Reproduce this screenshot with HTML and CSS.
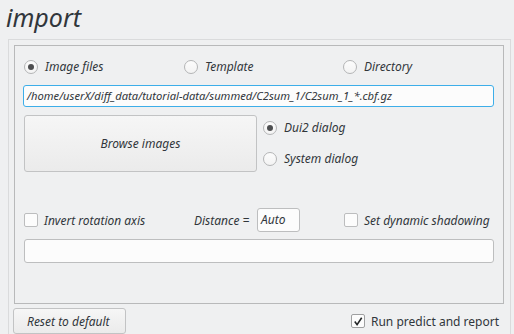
FILE: index.html
```html
<!DOCTYPE html>
<html lang="en">
<head>
    <meta charset="UTF-8">
    <title>import</title>
    <link rel="stylesheet" href="styles.css">
</head>
<body>
    <h1 class="title">import</h1>
    <div class="outer">
        <div class="inner">
            <div class="source-row">
                <label class="radio checked"><span class="dot"></span>Image files</label>
                <label class="radio"><span class="dot"></span>Template</label>
                <label class="radio"><span class="dot"></span>Directory</label>
            </div>
            <div class="path focused">/home/userX/diff_data/tutorial-data/summed/C2sum_1/C2sum_1_*.cbf.gz</div>
            <div class="browse-row">
                <button class="browse">Browse images</button>
                <div class="dialogs">
                    <label class="radio checked"><span class="dot"></span>Dui2 dialog</label>
                    <label class="radio"><span class="dot"></span>System dialog</label>
                </div>
            </div>
            <div class="options-row">
                <label class="check invert"><span class="box"></span>Invert rotation axis</label>
                <span class="dist-label">Distance =</span>
                <div class="auto">Auto</div>
                <label class="check shadow"><span class="box"></span>Set dynamic shadowing</label>
            </div>
            <div class="path empty"></div>
        </div>
        <div class="footer">
            <button class="reset">Reset to default</button>
            <label class="check run">
                <span class="box">
                    <svg width="13" height="13" viewBox="0 0 13 13"><path d="M3 6.5 L5.5 10 L10.5 2.5" fill="none" stroke="#232627" stroke-width="1.7"/></svg>
                </span>Run predict and report</label>
        </div>
    </div>
</body>
</html>
```

FILE: styles.css
```css
* {
    margin: 0;
    padding: 0;
    box-sizing: border-box;
}
html, body {
    width: 100%;
    height: 100%;
    overflow: hidden;
}
body {
    background-color: #eff0f1;
    color: #31363b;
    font-family: 'Noto Sans', sans-serif;
    font-size: 12px;
    font-style: italic;
}
.title {
    font-size: 25px;
    font-weight: normal;
    font-style: italic;
    line-height: 33px;
    height: 39px;
    padding-left: 6px;
    padding-top: 1px;
}
.outer {
    margin-left: 8px;
    width: 503px;
    height: 300px;
    border: 1px solid #dadbdc;
    border-bottom: none;
    padding: 5px 6px 0 5px;
}
.inner {
    height: 259px;
    border: 1px solid #b8b9ba;
    padding: 12px 9px 0 9px;
}
.source-row {
    display: grid;
    grid-template-columns: 160px 159px 1fr;
    height: 16px;
    align-items: center;
}
.radio, .check {
    display: flex;
    align-items: center;
    white-space: nowrap;
}
.dot {
    width: 14px;
    height: 14px;
    border-radius: 50%;
    border: 1px solid #b4b5b6;
    background: linear-gradient(#fcfcfc, #f3f3f3);
    margin-right: 7px;
    display: flex;
    align-items: center;
    justify-content: center;
}
.radio.checked .dot::after {
    content: "";
    width: 6px;
    height: 6px;
    border-radius: 50%;
    background: #4d4e50;
}
.path {
    margin-top: 11px;
    height: 22px;
    border: 1px solid #bdbebf;
    border-radius: 3px;
    background: #fcfcfc;
    padding-left: 3px;
    line-height: 20px;
    font-size: 11.2px;
}
.path.focused {
    border-color: #3daee9;
    margin-left: -1px;
}
.browse-row {
    display: flex;
    margin-top: 8px;
    height: 57px;
}
.browse {
    width: 233px;
    height: 57px;
    border: 1px solid #c2c3c4;
    border-radius: 3px;
    background: linear-gradient(#f6f6f6, #ebebeb);
    font-family: inherit;
    font-style: italic;
    font-size: 12px;
    color: #31363b;
}
.dialogs {
    margin-left: 6px;
    display: flex;
    flex-direction: column;
    gap: 14px;
    padding-top: 4px;
}
.box {
    width: 14px;
    height: 14px;
    border: 1px solid #bcbdbe;
    background: #fcfcfc;
    border-radius: 2px;
    margin-right: 6px;
    display: flex;
    align-items: center;
    justify-content: center;
}
.options-row {
    display: flex;
    align-items: center;
    margin-top: 36px;
    height: 24px;
}
.invert {
    width: 170px;
}
.dist-label {
    width: 63px;
}
.auto {
    width: 43px;
    height: 24px;
    border: 1px solid #bdbebf;
    border-radius: 3px;
    background: #fcfcfc;
    padding-left: 3px;
    line-height: 22px;
}
.shadow {
    margin-left: 44px;
}
.path.empty {
    margin-top: 7px;
    height: 24px;
}
.footer {
    display: flex;
    justify-content: space-between;
    align-items: center;
    margin-top: 4px;
    margin-left: -1px;
}
.reset {
    width: 113px;
    height: 26px;
    border: 1px solid #c2c3c4;
    border-radius: 3px;
    background: linear-gradient(#f6f6f6, #ebebeb);
    font-family: inherit;
    font-style: italic;
    font-size: 12px;
    color: #31363b;
    text-align: left;
    padding-left: 13px;
}
.run {
    font-style: normal;
    font-size: 12px;
    margin-right: 5px;
}
.run .box {
    border-color: #9fa0a1;
}
```
